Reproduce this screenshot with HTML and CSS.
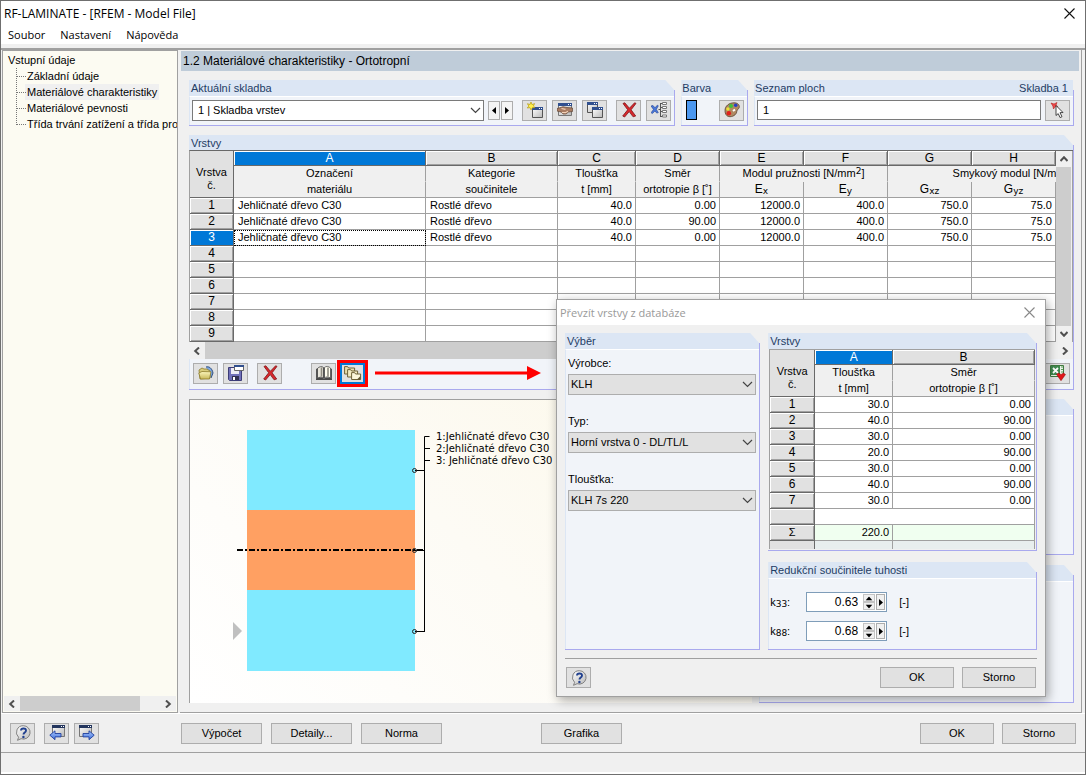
FILE: index.html
```html
<!DOCTYPE html>
<html lang="cs">
<head>
<meta charset="utf-8">
<title>RF-LAMINATE - [RFEM - Model File]</title>
<link rel="stylesheet" href="styles.css">
</head>
<body>
<svg class="defs" aria-hidden="true">
  <defs>
    <linearGradient id="g-blue" x1="0" y1="0" x2="0" y2="1"><stop offset="0" stop-color="#a9c8ff"/><stop offset="1" stop-color="#3f6fd8"/></linearGradient>
    <linearGradient id="g-win" x1="0" y1="0" x2="1" y2="1"><stop offset="0" stop-color="#ffffff"/><stop offset="1" stop-color="#b8b8b8"/></linearGradient>
    <linearGradient id="g-folder" x1="0" y1="0" x2="0" y2="1"><stop offset="0" stop-color="#fbf6bd"/><stop offset="1" stop-color="#c9b95a"/></linearGradient>
    <symbol id="i-down" viewBox="0 0 11 7"><path d="M1 1l4.500 4.500L10 1" fill="none" stroke="#444" stroke-width="1.200"/></symbol>
    <symbol id="i-left-tri" viewBox="0 0 4 7"><path d="M4 0v7L0 3.500z"/></symbol>
    <symbol id="i-right-tri" viewBox="0 0 4 7"><path d="M0 0v7l4-3.500z"/></symbol>
    <symbol id="i-chev" viewBox="0 0 8 8"><path d="M6 .5L2.200 4 6 7.500" fill="none" stroke="#505050" stroke-width="2"/></symbol>
    <symbol id="i-new" viewBox="0 0 16 16"><path d="M5.500 6.500h10v9h-10z" fill="url(#g-win)" stroke="#555"/><path d="M5 5h11v3H5z" fill="#31508f"/><path d="M12 6h1v1h-1zM14 6h1v1h-1z" fill="#fff"/><path d="M4 0l1 2.600 2.600-1L6.400 4 8 5.600l-2.600.1L4 8 3 5.600.3 6 1.800 4 .4 1.700 3 2.500z" fill="#fff04a" stroke="#b59b16" stroke-width=".7"/></symbol>
    <symbol id="i-edit" viewBox="0 0 16 16"><path d="M1.500 1.500h13v12h-13z" fill="url(#g-win)" stroke="#777"/><path d="M1 1h14v3H1z" fill="#31508f"/><path d="M11 2h1v1h-1zM13 2h1v1h-1z" fill="#fff"/><path d="M0 6.500l3-.8 3-1 4 .8 5.500.5v3.500l-4 .5-2.500 2H6l-1.500-1.800L0 9z" fill="#a97c62" stroke="#5e4638" stroke-width=".7"/><path d="M4.500 6.500l4 .8M5 10.500l3.500.2 2.500-1.500" fill="none" stroke="#f3d2b8" stroke-width="1.200"/></symbol>
    <symbol id="i-copy" viewBox="0 0 16 16"><path d="M.5.5h10v10H.5z" fill="url(#g-win)" stroke="#555"/><path d="M0 0h11v3H0z" fill="#31508f"/><path d="M5.500 6.500h10v9h-10z" fill="url(#g-win)" stroke="#555"/><path d="M5 5h11v3H5z" fill="#31508f"/><path d="M7 1h1v1H7zM9 1h1v1H9zM12 6h1v1h-1zM14 6h1v1h-1z" fill="#fff"/></symbol>
    <symbol id="i-del" viewBox="0 0 16 16"><path d="M2 1.500l1.800-.7 4.600 5.400L13.600.8l1.400.6-4.900 6.400 4.600 6.200-2.600.8-3.900-5.200L3.600 15l-1.900-1 5-6.200z" fill="#d8272b" stroke="#7e1518" stroke-width=".8"/></symbol>
    <symbol id="i-tree" viewBox="0 0 16 16"><path d="M0 4l2-.5 2 2.300 2.300-2.600 1 .6-2 3.600 2 3.200-1.600.5L4 8.900 1.400 11.500.1 10.700 2.500 7.400z" fill="#4a78dc" stroke="#203f91" stroke-width=".6"/><path d="M9.500 1v14M7.500 7.500h2M9.500 1.500h2M9.500 5.500h2M9.500 9.500h2M9.500 14.500h2" stroke="#555" fill="none"/><path d="M11.500.5h4v2h-4zM11.500 4.500h4v2h-4zM11.500 8.500h4v2h-4zM11.500 13h4v2h-4z" fill="#fff" stroke="#777"/></symbol>
    <symbol id="i-palette" viewBox="0 0 16 16"><path d="M1 8.500C1 4 5 .8 10 .8c3.600 0 5.600 1.900 5.300 4.400-.3 2.200-2.600 2.200-2.500 4 .1 2.400-2.800 5.500-6.800 5.500C2.600 14.700 1 12 1 8.500z" fill="#b08a62" stroke="#5b4330" stroke-width=".8"/><circle cx="7" cy="4" r="2" fill="#3fc23b"/><circle cx="11.700" cy="3.200" r="1.800" fill="#2340c8"/><circle cx="3.900" cy="7" r="1.700" fill="#ece233"/><circle cx="4.800" cy="11.200" r="2.300" fill="#e0201c"/><path d="M9 9l2-1.500" stroke="#fff" stroke-width="2"/></symbol>
    <symbol id="i-pick" viewBox="0 0 16 16"><path d="M1 1l3 1 3-1.500L6 3.200l2 1.600-3-.2L3.500 7l-.6-3z" fill="#f04a4a" stroke="#b31f1f" stroke-width=".6"/><path d="M6 3.500l7 7-3 .2 2 4-1.900.9-1.900-4L6 13.500z" fill="#fff" stroke="#333" stroke-width=".9"/></symbol>
    <symbol id="i-open" viewBox="0 0 16 16"><path d="M8 2c3-.8 6 1 7 6l-2 5" fill="#7ea6e0" stroke="#30507f"/><path d="M1 5l3-2 2 1h3l3 2v7L2 14z" fill="#d8cc7c" stroke="#8a7a2a" stroke-width=".8"/><path d="M.8 8L4 6.500l9 .3L11.500 14H2.500z" fill="url(#g-folder)" stroke="#8a7a2a" stroke-width=".8"/></symbol>
    <symbol id="i-save" viewBox="0 0 16 16"><path d="M.5 2.500h13v13h-12l-1-1z" fill="#7070b8" stroke="#3c3c78"/><path d="M3 3h8v6H3z" fill="#ececf4"/><path d="M4 11h7v4H4z" fill="#303050"/><path d="M5 12h2v3H5z" fill="#fff"/><path d="M6.500.5h9v5h-9z" fill="#fff" stroke="#666"/><path d="M6 0h10v2H6z" fill="#31508f"/></symbol>
    <symbol id="i-book" viewBox="0 0 18 16"><path d="M1 4l2-1v9l-2 1.500zM17 4l-2-1v9l2 1.500z" fill="#555"/><path d="M2.500 3.500C4 1.500 7 1 8.500 2.500v10.500C7 11.500 4 12 2.500 13.500z" fill="#e9e6dc" stroke="#444" stroke-width=".8"/><path d="M9.500 2.500C11 1 13.500 1 15.500 3v10c-2-1.500-4.500-1.500-6 0z" fill="#fffdf0" stroke="#555" stroke-width=".8"/><path d="M6.500 2.500v9M13 2.500v9" stroke="#8d8a80" stroke-width="1.600"/><path d="M9 2.500V14" stroke="#444"/><path d="M1 13.300c3-1 6-1 8 .6 2-1.600 5-1.600 8-.6V15H1z" fill="#494949"/></symbol>
    <symbol id="i-layers" viewBox="0 0 18 16"><path d="M.6 1.600h3l1 1.400h6v6h-10z" fill="#eadfae" stroke="#6e6238"/><path d="M3.600 4.600h3l1 1.400h6v6h-10z" fill="#f3ebc4" stroke="#6e6238"/><path d="M7.600 7.600h3l1 1.400h5v5.500h-9z" fill="#fbf6dc" stroke="#6e6238"/><path d="M13 14.500l3.500-3.500v3.500z" fill="#5e5533"/></symbol>
    <symbol id="i-excel" viewBox="0 0 16 16"><path d="M.5.5h13v11H.5z" fill="#e8f4e8" stroke="#3f7a3f"/><path d="M1 1h9v9H1z" fill="#3f8a50"/><path d="M3 3l5 5M8 3L3 8" stroke="#fff" stroke-width="1.800"/><path d="M11 2h2M11 4.500h2M11 7h2" stroke="#5c9a5c"/><path d="M6.500 9.500l2-1.500 2.500 1.500L13.500 8l2 1.500L11 15.700z" fill="#e0161a" stroke="#8a0c0e" stroke-width=".5"/></symbol>
    <symbol id="i-help" viewBox="0 0 16 16"><path d="M8.300.7a6.700 6.700 0 1 1-2.200 13L2.500 15.300l1.100-3A6.700 6.700 0 0 1 8.300.7z" fill="url(#g-win)" stroke="#777" stroke-width=".9"/><path d="M6 5.600C6 2.800 11 2.700 11 5.400 11 7.600 8.500 7.500 8.500 9.600" fill="none" stroke="#22418f" stroke-width="1.900"/><circle cx="8.400" cy="12" r="1.200" fill="#22418f"/></symbol>
    <symbol id="i-back" viewBox="0 0 16 16"><path d="M3.500.5h12v11h-12z" fill="url(#g-win)" stroke="#777"/><path d="M3 0h13v3H3z" fill="#24365e"/><path d="M12 1h1v1h-1zM14 1h1v1h-1z" fill="#fff"/><path d="M.8 10.200L6 5.800v2.700h6v3.400H6v2.800z" fill="url(#g-blue)" stroke="#1f3f9e" stroke-width=".9"/></symbol>
    <symbol id="i-next" viewBox="0 0 16 16"><path d="M.5.5h12v11H.5z" fill="url(#g-win)" stroke="#777"/><path d="M0 0h13v3H0z" fill="#24365e"/><path d="M9 1h1v1H9zM11 1h1v1h-1z" fill="#fff"/><path d="M15.200 10.200L10 5.800v2.700H4v3.400h6v2.800z" fill="url(#g-blue)" stroke="#1f3f9e" stroke-width=".9"/></symbol>
    <symbol id="i-close" viewBox="0 0 11 11"><path d="M.5.5l10 10M10.500.5l-10 10" fill="none" stroke="currentColor" stroke-width="1.100"/></symbol>
  </defs>
</svg>

<header class="titlebar">
  <h1>RF-LAMINATE - [RFEM - Model File]</h1>
  <button class="close" aria-label="Zavřít"><svg width="11" height="11"><use href="#i-close"/></svg></button>
</header>
<nav class="menubar">
  <button>Soubor</button><button>Nastavení</button><button>Nápověda</button>
</nav>

<div class="workspace">
  <aside class="tree">
    <div class="tree-body">
      <a class="root" href="#">Vstupní údaje</a>
      <ul>
        <li><a href="#">Základní údaje</a></li>
        <li><a class="current" href="#">Materiálové charakteristiky</a></li>
        <li><a href="#">Materiálové pevnosti</a></li>
        <li><a href="#">Třída trvání zatížení a třída prov</a></li>
      </ul>
    </div>
    <div class="hscroll">
      <button aria-label="Vlevo"><svg width="8" height="8"><use href="#i-chev"/></svg></button>
      <span class="track"><span class="thumb thumb-tree"></span></span>
      <button aria-label="Vpravo"><svg class="flip" width="8" height="8"><use href="#i-chev"/></svg></button>
    </div>
  </aside>

  <main class="content">
    <h2 class="page-title">1.2 Materiálové charakteristiky - Ortotropní</h2>
    <div class="sections">
      <div class="top-row">
        <section class="group g-current">
          <h3><label for="skladba">Aktuální skladba</label></h3>
          <div class="bar">
            <span class="combo white"><select id="skladba"><option>1 | Skladba vrstev</option></select><svg width="11" height="7"><use href="#i-down"/></svg></span>
            <span class="pager">
              <button class="mini" aria-label="Předchozí"><svg width="4" height="7"><use href="#i-left-tri"/></svg></button>
              <button class="mini" aria-label="Další"><svg width="4" height="7"><use href="#i-right-tri"/></svg></button>
            </span>
            <span class="tools">
              <button class="tool" aria-label="Nová"><svg width="16" height="16"><use href="#i-new"/></svg></button>
              <button class="tool" aria-label="Upravit"><svg width="16" height="16"><use href="#i-edit"/></svg></button>
              <button class="tool" aria-label="Kopírovat"><svg width="16" height="16"><use href="#i-copy"/></svg></button>
            </span>
            <span class="tools">
              <button class="tool" aria-label="Smazat"><svg width="16" height="16"><use href="#i-del"/></svg></button>
              <button class="tool" aria-label="Smazat vše"><svg width="16" height="16"><use href="#i-tree"/></svg></button>
            </span>
          </div>
        </section>
        <section class="group g-color">
          <h3>Barva</h3>
          <div class="bar spread">
            <span class="swatch"></span>
            <button class="tool" aria-label="Barva"><svg width="16" height="16"><use href="#i-palette"/></svg></button>
          </div>
        </section>
        <section class="group g-areas">
          <h3 class="plain"><label for="plochy">Seznam ploch</label><span>Skladba 1</span></h3>
          <div class="bar">
            <input id="plochy" class="field" type="text" value="1">
            <button class="tool" aria-label="Vybrat"><svg width="16" height="16"><use href="#i-pick"/></svg></button>
          </div>
        </section>
      </div>

      <section class="group g-layers">
        <h3>Vrstvy</h3>
        <div class="grid-frame">
          <div class="grid-clip">
            <table class="grid main-grid">
              <colgroup><col class="c-no"><col class="c-name"><col class="c-cat"><col class="c-t"><col class="c-n"><col class="c-n"><col class="c-n"><col class="c-n"><col class="c-n"><col class="c-n"></colgroup>
              <thead>
                <tr class="letters"><th class="corner" rowspan="3">Vrstva<br>č.</th><th class="active">A</th><th>B</th><th>C</th><th>D</th><th>E</th><th>F</th><th>G</th><th>H</th><th></th></tr>
                <tr class="h1"><th>Označení</th><th>Kategorie</th><th>Tloušťka</th><th>Směr</th><th colspan="2">Modul pružnosti [N/mm<sup>2</sup>]</th><th colspan="3">Smykový modul [N/mm<sup>2</sup>]</th></tr>
                <tr class="h2"><th>materiálu</th><th>součinitele</th><th>t [mm]</th><th>ortotropie β [˚]</th><th class="sy">E<sub>x</sub></th><th class="sy">E<sub>y</sub></th><th class="sy">G<sub>xz</sub></th><th class="sy">G<sub>yz</sub></th><th class="sy"></th></tr>
              </thead>
              <tbody>
                <tr><th>1</th><td>Jehličnaté dřevo C30</td><td>Rostlé dřevo</td><td>40.0</td><td>0.00</td><td>12000.0</td><td>400.0</td><td>750.0</td><td>75.0</td><td></td></tr>
                <tr><th>2</th><td>Jehličnaté dřevo C30</td><td>Rostlé dřevo</td><td>40.0</td><td>90.00</td><td>12000.0</td><td>400.0</td><td>750.0</td><td>75.0</td><td></td></tr>
                <tr><th class="active">3</th><td class="focus">Jehličnaté dřevo C30</td><td>Rostlé dřevo</td><td>40.0</td><td>0.00</td><td>12000.0</td><td>400.0</td><td>750.0</td><td>75.0</td><td></td></tr>
                <tr><th>4</th><td></td><td></td><td></td><td></td><td></td><td></td><td></td><td></td><td></td></tr>
                <tr><th>5</th><td></td><td></td><td></td><td></td><td></td><td></td><td></td><td></td><td></td></tr>
                <tr><th>6</th><td></td><td></td><td></td><td></td><td></td><td></td><td></td><td></td><td></td></tr>
                <tr><th>7</th><td></td><td></td><td></td><td></td><td></td><td></td><td></td><td></td><td></td></tr>
                <tr><th>8</th><td></td><td></td><td></td><td></td><td></td><td></td><td></td><td></td><td></td></tr>
                <tr><th>9</th><td></td><td></td><td></td><td></td><td></td><td></td><td></td><td></td><td></td></tr>
              </tbody>
            </table>
          </div>
          <div class="vscroll">
            <button aria-label="Nahoru"><svg class="up" width="8" height="8"><use href="#i-chev"/></svg></button>
            <span class="vtrack"></span>
            <button aria-label="Dolů"><svg class="down" width="8" height="8"><use href="#i-chev"/></svg></button>
          </div>
        </div>
        <div class="hscroll">
          <button aria-label="Vlevo"><svg width="8" height="8"><use href="#i-chev"/></svg></button>
          <span class="track"><span class="thumb thumb-grid"></span></span>
          <button aria-label="Vpravo"><svg class="flip" width="8" height="8"><use href="#i-chev"/></svg></button>
        </div>
        <div class="bar grid-tools">
          <span class="tools">
            <button class="tool" aria-label="Otevřít"><svg width="16" height="16"><use href="#i-open"/></svg></button>
            <button class="tool" aria-label="Uložit"><svg width="16" height="16"><use href="#i-save"/></svg></button>
          </span>
          <button class="tool" aria-label="Smazat"><svg width="16" height="16"><use href="#i-del"/></svg></button>
          <span class="tools library">
            <button class="tool" aria-label="Knihovna"><svg width="18" height="16"><use href="#i-book"/></svg></button>
            <button class="tool marked" aria-label="Převzít vrstvy z databáze"><svg width="18" height="16"><use href="#i-layers"/></svg></button>
          </span>
          <svg class="arrow" width="167" height="16" viewBox="0 0 167 16"><path d="M1 8h154" stroke="#f00" stroke-width="3"/><path d="M153 1v14l14-7z" fill="#f00"/></svg>
          <button class="tool last" aria-label="Excel"><svg width="16" height="16"><use href="#i-excel"/></svg></button>
        </div>
      </section>

      <div class="bottom-row">
        <figure class="drawing">
          <svg width="375" height="280" viewBox="0 0 375 280">
            <path d="M57 30h168v80H57zM57 190h168v81H57z" fill="#80eaff"/>
            <path d="M57 110h168v80H57z" fill="#ffa062"/>
            <path d="M43 222l9 9-9 9z" fill="#c0c0c0"/>
            <path d="M47 150h188" stroke="#000" stroke-width="2" stroke-dasharray="6 2 2 2"/>
            <path d="M225 70.500h10M225 150.500h10M225 231.500h10M234.500 232V36.500h5M235 48.500h5M235 60.500h5" stroke="#000" fill="none"/>
            <g fill="none" stroke="#222"><circle cx="224.500" cy="70.500" r="2"/><circle cx="224.500" cy="150.500" r="2"/><circle cx="224.500" cy="231.500" r="2"/></g>
            <text x="246" y="40">1:Jehličnaté dřevo C30</text>
            <text x="246" y="52">2:Jehličnaté dřevo C30</text>
            <text x="246" y="64">3: Jehličnaté dřevo C30</text>
          </svg>
        </figure>
        <div class="side">
          <section class="group"><h3></h3><div class="fill"></div></section>
          <section class="group"><h3></h3><div class="fill"></div></section>
        </div>
      </div>
    </div>
  </main>
</div>

<footer class="actions">
  <button class="tool help" aria-label="Nápověda"><svg width="16" height="16"><use href="#i-help"/></svg></button>
  <span class="tools">
    <button class="tool" aria-label="Zpět"><svg width="16" height="16"><use href="#i-back"/></svg></button>
    <button class="tool" aria-label="Vpřed"><svg width="16" height="16"><use href="#i-next"/></svg></button>
  </span>
  <span class="btns run"><button class="btn wide">Výpočet</button><button class="btn wide">Detaily...</button><button class="btn wide">Norma</button></span>
  <span class="btns"><button class="btn wide">Grafika</button></span>
  <span class="btns end"><button class="btn">OK</button><button class="btn">Storno</button></span>
</footer>
<div class="status"></div>

<div class="dialog" role="dialog" aria-labelledby="dlg-title">
  <header class="dlg-title">
    <h2 id="dlg-title">Převzít vrstvy z databáze</h2>
    <button class="close" aria-label="Zavřít"><svg width="11" height="11"><use href="#i-close"/></svg></button>
  </header>
  <div class="dlg-body">
    <section class="group pick">
      <h3>Výběr</h3>
      <div class="fill form">
        <label for="vyrobce">Výrobce:</label>
        <span class="combo"><select id="vyrobce"><option>KLH</option></select><svg width="11" height="7"><use href="#i-down"/></svg></span>
        <label for="typ">Typ:</label>
        <span class="combo"><select id="typ"><option>Horní vrstva 0 - DL/TL/L</option></select><svg width="11" height="7"><use href="#i-down"/></svg></span>
        <label for="tloustka">Tloušťka:</label>
        <span class="combo"><select id="tloustka"><option>KLH 7s 220</option></select><svg width="11" height="7"><use href="#i-down"/></svg></span>
      </div>
    </section>
    <div class="dlg-right">
      <section class="group">
        <h3>Vrstvy</h3>
        <div class="small-clip">
          <table class="grid small-grid">
            <colgroup><col class="c-no"><col class="c-t"><col></colgroup>
            <thead>
              <tr class="letters"><th class="corner" rowspan="3">Vrstva<br>č.</th><th class="active">A</th><th>B</th></tr>
              <tr class="h1"><th>Tloušťka</th><th>Směr</th></tr>
              <tr class="h2"><th>t [mm]</th><th>ortotropie β [˚]</th></tr>
            </thead>
            <tbody>
              <tr><th>1</th><td>30.0</td><td>0.00</td></tr>
              <tr><th>2</th><td>40.0</td><td>90.00</td></tr>
              <tr><th>3</th><td>30.0</td><td>0.00</td></tr>
              <tr><th>4</th><td>20.0</td><td>90.00</td></tr>
              <tr><th>5</th><td>30.0</td><td>0.00</td></tr>
              <tr><th>6</th><td>40.0</td><td>90.00</td></tr>
              <tr><th>7</th><td>30.0</td><td>0.00</td></tr>
              <tr><th></th><td colspan="2"></td></tr>
              <tr class="sum"><th>Σ</th><td>220.0</td><td></td></tr>
              <tr class="rest"><th></th><td></td><td></td></tr>
            </tbody>
          </table>
        </div>
      </section>
      <section class="group">
        <h3>Redukční součinitele tuhosti</h3>
        <div class="fill factors">
          <div class="factor">
            <label for="k33">k<sub>33</sub>:</label>
            <span class="spin"><input id="k33" type="text" value="0.63"><span class="updown"><button aria-label="Více"><svg class="t-up" width="4" height="7"><use href="#i-left-tri"/></svg></button><button aria-label="Méně"><svg class="t-down" width="4" height="7"><use href="#i-left-tri"/></svg></button></span><button class="more" aria-label="Další"><svg width="4" height="7"><use href="#i-right-tri"/></svg></button></span>
            <span>[-]</span>
          </div>
          <div class="factor">
            <label for="k88">k<sub>88</sub>:</label>
            <span class="spin"><input id="k88" type="text" value="0.68"><span class="updown"><button aria-label="Více"><svg class="t-up" width="4" height="7"><use href="#i-left-tri"/></svg></button><button aria-label="Méně"><svg class="t-down" width="4" height="7"><use href="#i-left-tri"/></svg></button></span><button class="more" aria-label="Další"><svg width="4" height="7"><use href="#i-right-tri"/></svg></button></span>
            <span>[-]</span>
          </div>
        </div>
      </section>
    </div>
  </div>
  <footer class="dlg-foot">
    <button class="tool" aria-label="Nápověda"><svg width="16" height="16"><use href="#i-help"/></svg></button>
    <span class="btns end"><button class="btn">OK</button><button class="btn">Storno</button></span>
  </footer>
</div>
</body>
</html>
```
FILE: styles.css
```css
* { box-sizing: border-box; }
html { height: 100%; }
body {
  margin: 0;
  min-height: 100%;
  display: flex;
  flex-direction: column;
  position: relative;
  border: 1px solid #6f6f6f;
  background: #f0f0f0;
  color: #000;
  font: 11px/13px "Liberation Sans", Arial, sans-serif;
}
.defs { position: absolute; width: 0; height: 0; }
svg { display: block; flex: none; }
h1, h2, h3, figure, ul { margin: 0; padding: 0; font-weight: normal; }
button, input, select { font: inherit; color: inherit; margin: 0; padding: 0; border-radius: 0; }
button { border: 0; background: none; }
a { color: inherit; text-decoration: none; }

/* window chrome */
.titlebar { display: flex; align-items: center; justify-content: space-between; height: 25px; padding: 0 10px 0 3px; background: #fff; }
.titlebar h1 { font: 12px/16px "Open Sans", "Noto Sans", sans-serif; }
.close { display: grid; place-items: center; color: #111; }
.menubar { display: flex; gap: 15px; height: 18px; padding-left: 7px; background: #fff; }
.menubar button { font: 11px/18px "Open Sans", "Noto Sans", sans-serif; }

.workspace { display: flex; flex: 1; gap: 2px; margin-top: 4px; border-top: 2px solid #a0a0a0; border-bottom: 1px solid #fff; padding: 0 3px 0 1px; }
.tree { display: flex; flex-direction: column; flex: none; width: 176px; background: #fcfbf2; border: 1px solid #a0a0a0; }
.tree-body { flex: 1; overflow: hidden; padding: 1px 0 0 5px; line-height: 16px; white-space: nowrap; }
.tree .root { display: block; }
.tree ul { list-style: none; margin-left: 8px; }
.tree li { position: relative; padding-left: 9px; }
.tree li::before { content: ""; position: absolute; left: 0; top: -8px; width: 9px; height: 16px; border-left: 1px dotted #777; border-bottom: 1px dotted #777; }
.tree li:first-child::before { top: 0; height: 8px; }
.tree li a { display: inline-block; padding: 0 2px; }
.tree .current { background: #f0f0f0; }

.hscroll { display: flex; height: 17px; background: #f0f0f0; }
.tree .hscroll { margin: 1px; height: 15px; }
.hscroll button { display: grid; place-items: center; width: 16px; }
.track { flex: 1; display: flex; }
.thumb { background: #cdcdcd; }
.thumb-tree { width: 86%; }
.thumb-grid { width: 80%; }
.flip { transform: rotate(180deg); }
.up { transform: rotate(90deg); }
.down { transform: rotate(-90deg); }

.content { display: flex; flex-direction: column; flex: 1; min-width: 0; border: solid #a0a0a0; border-width: 0 1px 1px 0; padding: 1px 2px 9px 1px; }
.page-title { height: 20px; padding-left: 2px; background: #bfccd9; font-size: 12px; line-height: 20px; }
.sections { display: flex; flex-direction: column; flex: 1; gap: 9px; padding: 9px 5px 0 8px; }
.top-row { display: flex; gap: 6px; }

/* group boxes */
.group { display: flex; flex-direction: column; min-width: 0; padding-right: 1px; border-bottom: 1px solid #a9a9ee; background: linear-gradient(#a9a9ee, #a9a9ee) no-repeat 100% 10px / 1px 100%; }
.group h3 { display: flex; justify-content: space-between; height: 16px; flex: none; padding: 0 5px 0 2px; background: #dce6f4; color: #1e3c64; font-size: 11px; line-height: 16px; clip-path: polygon(0 0, calc(100% - 9px) 0, 100% 10px, 100% 100%, 0 100%); }
.group h3.plain { clip-path: none; }
.g-layers h3 { height: 15px; }
.g-current { flex: 487; }
.g-color { flex: 66; }
.g-areas { flex: 320; }
.g-color h3, .g-areas h3 { padding-left: 1px; }
.bar { display: flex; align-items: center; gap: 4px; height: 29px; padding: 0 3px 2px 2px; border-top: 1px solid #fff; border-left: 1px solid #dce6f4; background: #f1f4f9; }
.spread { justify-content: space-between; }
.fill { flex: 1; border-top: 1px solid #fff; border-left: 1px solid #dce6f4; background: #f1f4f9; }
.tools { display: flex; gap: 5px; margin-left: 5px; }
.tool { display: grid; place-items: center; flex: none; width: 25px; height: 21px; border: 1px solid #adadad; background: #e1e1e1; }
.pager { display: flex; gap: 1px; }
.mini { display: grid; place-items: center; width: 12px; height: 19px; border: 1px solid #adadad; background: #f4f4f4; }
.swatch { width: 11px; height: 20px; margin-left: 2px; border: 1px solid #000; background: #4c98f0; }

.combo { display: grid; flex: 1; align-items: center; }
.combo select, .combo svg { grid-area: 1 / 1; }
.combo svg { justify-self: end; margin-right: 3px; pointer-events: none; }
.combo select { appearance: none; width: 100%; height: 21px; padding: 0 2px; border: 1px solid #adadad; background: #e1e1e1; }
.combo.white select { padding: 0 5px; border-color: #7a7a7a; background: #fff; }
.field { flex: 1; min-width: 0; height: 20px; padding: 0 5px; border: 1px solid #7a7a7a; background: #fff; }

/* tables */
.grid-frame { display: flex; border-left: 1px solid #a0a0a0; border-top: 1px solid #696969; }
.grid-clip { flex: 1; min-width: 0; overflow: hidden; background: #fff; }
.vscroll { display: flex; flex-direction: column; width: 17px; border-right: 1px solid #a0a0a0; background: #f0f0f0; }
.vscroll button { display: grid; place-items: center; height: 16px; }
.vtrack { flex: 1; background: #cdcdcd; margin-right: 1px; }
.grid { table-layout: fixed; border-collapse: separate; border-spacing: 0; white-space: nowrap; }
.main-grid { width: 949px; }
.small-grid { width: 100%; }
.c-no { width: 45px; }
.c-name { width: 192px; }
.main-grid .c-no { width: 44px; }
.c-cat { width: 132px; }
.c-t { width: 78px; }
.c-n { width: 84px; }
.grid th, .grid td { height: 16px; padding: 0 3px; border: solid #a0a0a0; border-width: 0 1px 1px 0; font-weight: normal; line-height: 15px; overflow: hidden; }
.grid td { background: #fff; text-align: right; }
.main-grid td:nth-child(2), .main-grid td:nth-child(3) { text-align: left; padding-left: 4px; }
.grid thead th { background: #f0f0f0; }
.grid .letters th, .grid tbody th { border-color: #696969; background: #e1e1e1; box-shadow: inset 1px 1px #fff, inset -1px -1px #a0a0a0; font-size: 12px; }
.grid .letters th { height: 15px; line-height: 14px; }
.grid .letters .corner { padding-top: 10px; border-color: #696969; box-shadow: none; font-size: 11px; line-height: 13px; }
.grid .letters .active, .grid tbody .active { background: #0078d7; color: #fff; box-shadow: inset 1px 1px #fff; }
.grid .h1 th { border-bottom-color: #f0f0f0; }
.grid .sum th { font-size: 11px; }
.grid .sy { font-size: 12px; }
.grid .focus { outline: 1px dotted #000; outline-offset: -1px; }
sup, sub { font: 9px/1 "DejaVu Sans", sans-serif; vertical-align: baseline; position: relative; }
sup { top: -3px; }
sub { top: 1px; }

.grid-tools { height: 30px; border-top: 0; gap: 9px; padding-left: 3px; }
.grid-tools .tools { margin-left: 0; }
.grid-tools .library { margin-left: 20px; gap: 4px; }
.marked { border: 2px solid #0078d7; outline: 3px solid #f00; }
.last { margin-left: auto; }

.bottom-row { display: flex; flex: 1; gap: 7px; }
.drawing { flex: 563; min-width: 0; overflow: hidden; border: solid #a0a0a0; border-width: 1px 0 0 1px; background: linear-gradient(45deg, #fff 0%, #fdfbf5 50%, #fcf8e8 100%); }
.drawing text { font: 10px "DejaVu Sans", sans-serif; }
.side { display: flex; flex-direction: column; flex: 315; gap: 10px; min-width: 0; }
.side .group:first-child { flex: 156; }
.side .group:last-child { flex: 138; }

/* button rows */
.actions { display: flex; align-items: center; height: 38px; padding: 0 9px; }
.actions .tools { margin-left: 9px; }
.btns { display: flex; gap: 9px; }
.run { margin: 0 99px 0 82px; }
.end { margin-left: auto; gap: 8px; }
.btn { width: 74px; height: 21px; border: 1px solid #adadad; background: #e1e1e1; line-height: 19px; }
.btn.wide { width: 81px; }
.status { height: 22px; border-top: 1px solid #a0a0a0; border-bottom: 2px solid #fff; }

/* floating dialog */
.dialog { position: absolute; left: 555px; top: 298px; width: 490px; display: flex; flex-direction: column; border: 1px solid #a0a0a0; background: #f0f0f0; box-shadow: 2px 3px 10px rgba(0, 0, 0, .35); }
.dlg-title { display: flex; align-items: center; justify-content: space-between; height: 25px; padding: 0 10px 0 3px; background: #fff; color: #999; }
.dlg-title h2 { font: 11px/16px "Open Sans", "Noto Sans", sans-serif; }
.dlg-title .close { color: #888; }
.dlg-body { display: flex; gap: 8px; margin: 8px 8px 0; padding-bottom: 8px; border-bottom: 1px solid #a0a0a0; }
.pick { flex: 195; }
.dlg-right { display: flex; flex-direction: column; flex: 270; gap: 11px; min-width: 0; }
.form { padding: 5px 3px 0 2px; }
.form label { display: block; line-height: 16px; margin-bottom: 3px; }
.form .combo { margin-bottom: 18px; }
.small-clip { height: 200px; margin-bottom: 1px; overflow: hidden; border: solid #a0a0a0; border-width: 1px 0 0 1px; margin-right: 1px; margin-left: 1px; }
.grid .sum td { background: #f0fff0; }
.grid .rest td { background: #e8eeee; }
.grid .rest th { box-shadow: none; }
.factors { display: flex; flex-direction: column; gap: 9px; padding: 13px 0 8px 1px; }
.factor { display: flex; align-items: center; height: 20px; gap: 12px; }
.factor label { width: 24px; }
.spin { display: flex; align-items: center; gap: 1px; width: 81px; height: 20px; padding: 0 1px; border: 1px solid #7f9db9; background: #fff; }
.spin input { flex: 1; min-width: 0; height: 18px; border: 0; padding: 0 4px 0 0; background: none; text-align: right; font-size: 12px; }
.updown { display: flex; flex-direction: column; width: 12px; }
.updown button { display: grid; place-items: center; height: 8px; border: 1px solid #c4c4c4; background: #f0f0f0; }
.more { display: grid; place-items: center; width: 9px; height: 16px; border: 1px solid #adadad; background: #f0f0f0; }
.t-up { transform: rotate(90deg); }
.t-down { transform: rotate(-90deg); }
.dlg-foot { display: flex; align-items: center; height: 37px; padding: 0 9px; }
```
